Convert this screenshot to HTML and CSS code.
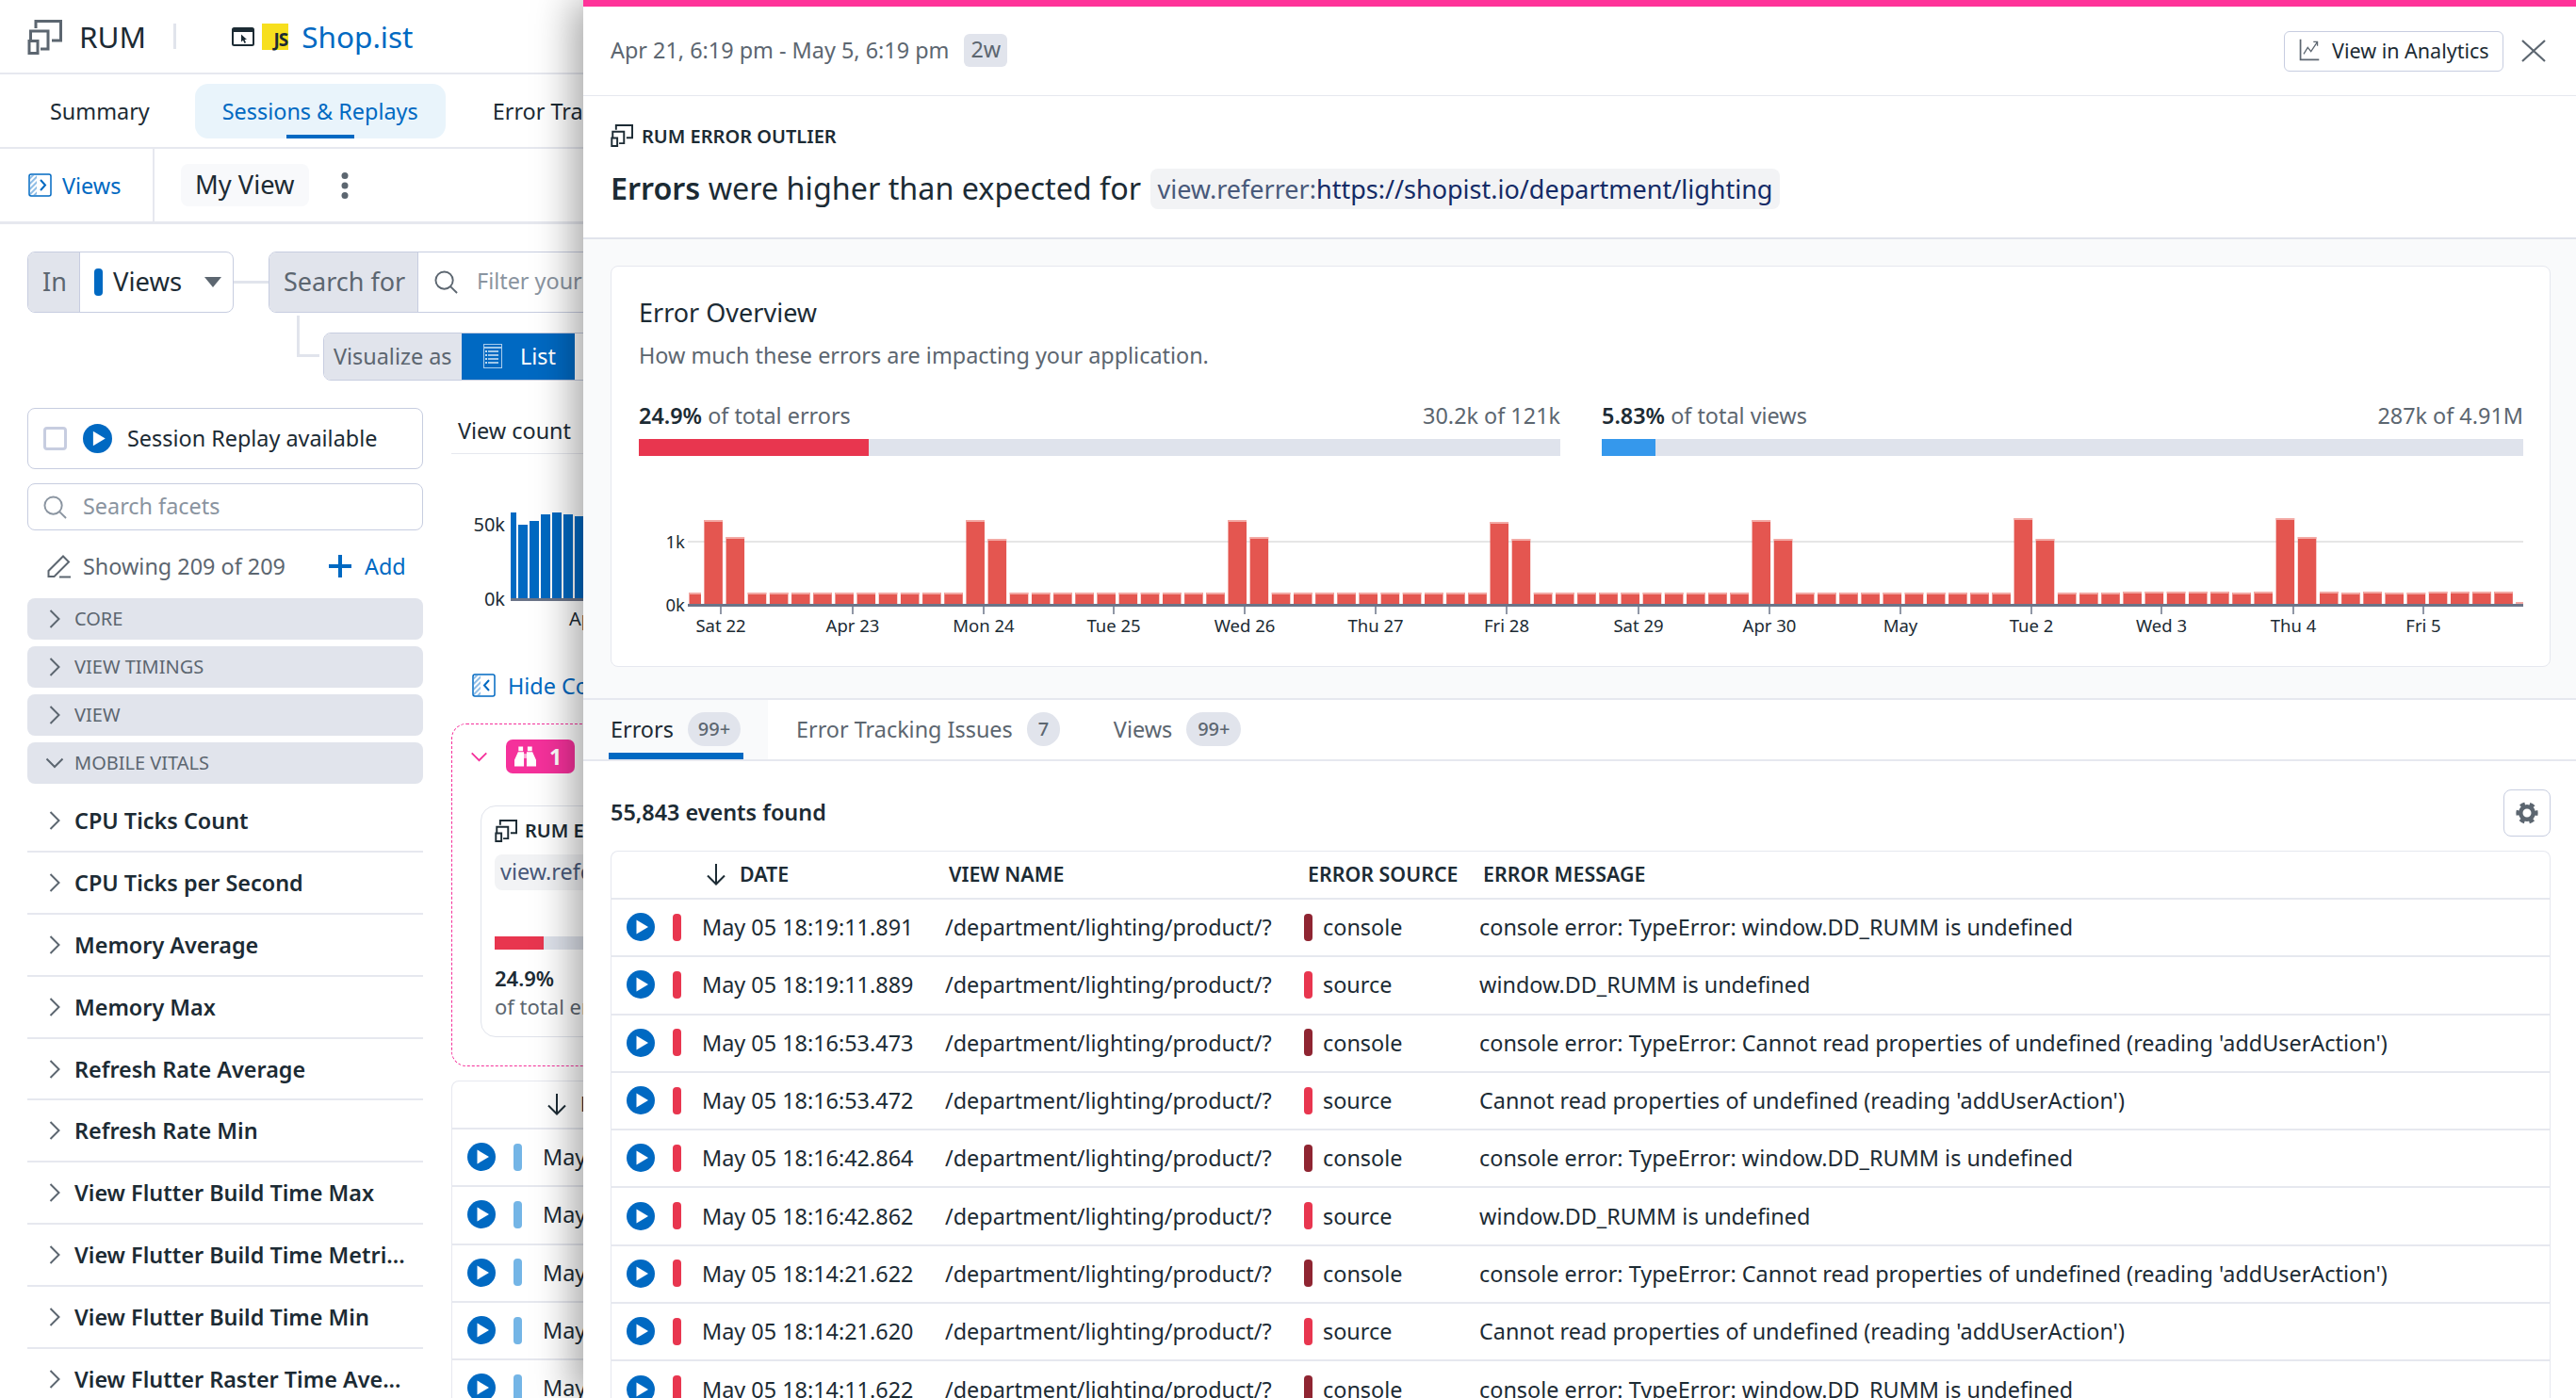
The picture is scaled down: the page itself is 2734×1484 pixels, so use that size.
FILE: index.html
```html
<!DOCTYPE html>
<html lang="en">
<head>
  <meta charset="UTF-8" />
  <meta name="viewport" content="width=device-width, initial-scale=1.0" />
  <title>RUM - Shop.ist</title>
  <link rel="stylesheet" href="styles.css">
</head>
<body>

  <svg class="icon-defs" width="0" height="0">
    <defs>
      <symbol id="rum" viewBox="0 0 37 37">
        <path d="M9 9V1.5H35.5V22H26M3.5 21V12H22V31H14M2 22.5H11V35.5H2Z" fill="none" stroke="currentColor" stroke-width="3"/>
      </symbol>
      <symbol id="search" viewBox="0 0 26 26">
        <circle cx="11" cy="11" r="9.5" fill="none" stroke="currentColor" stroke-width="2"/>
        <path d="M18 18L25 25" stroke="currentColor" stroke-width="2"/>
      </symbol>
      <symbol id="play" viewBox="0 0 30 30">
        <circle cx="15" cy="15" r="15" fill="#0069c2"/>
        <path d="M10.5 7.5L23 15L10.5 22.5Z" fill="#fff"/>
      </symbol>
      <symbol id="chevron" viewBox="0 0 12 22">
        <path d="M1.5 2L10.5 11L1.5 20" fill="none" stroke="currentColor" stroke-width="2"/>
      </symbol>
      <symbol id="chevron-down" viewBox="0 0 20 12">
        <path d="M1.5 1.5L10 10L18.5 1.5" fill="none" stroke="currentColor" stroke-width="2"/>
      </symbol>
      <pattern id="hatch" width="4" height="4" patternUnits="userSpaceOnUse" patternTransform="rotate(45)">
        <rect width="2" height="4" fill="#8fbde6"/>
      </pattern>
    </defs>
  </svg>

  <div class="app">
    <header class="app-header">
      <svg class="rum-logo"><use href="#rum"/></svg>
      <span class="app-title">RUM</span>
      <span class="header-divider"></span>
      <svg class="browser-icon" viewBox="0 0 24 20">
        <rect x="1" y="1" width="22" height="18" rx="1.5" fill="#fff" stroke="#1c2b34" stroke-width="2"/>
        <rect x="1" y="1" width="22" height="4" fill="#1c2b34"/>
        <path d="M10 7.5V15.5L12 13.7L13.5 17L15 16.2L13.6 13H16Z" fill="#1c2b34"/>
      </svg>
      <span class="js-tile">JS</span>
      <span class="app-name">Shop.ist</span>
    </header>

    <nav class="nav-tabs">
      <a class="nav-tab">Summary</a>
      <a class="nav-tab nav-tab-active">Sessions &amp; Replays</a>
      <a class="nav-tab">Error Tracking</a>
    </nav>

    <div class="view-bar">
      <div class="view-toggle">
        <svg class="panel-icon" viewBox="0 0 25 25">
          <rect x="1" y="1" width="23" height="23" rx="2" fill="#fff" stroke="#0069c2" stroke-width="1.5"/>
          <rect x="2" y="2" width="7" height="21" fill="url(#hatch)"/>
          <path d="M13 7L18 12.5L13 18" fill="none" stroke="#0069c2" stroke-width="2"/>
        </svg>
        <span>Views</span>
      </div>
      <span class="view-chip">My View</span>
      <svg class="dots" viewBox="0 0 8 28">
        <circle cx="4" cy="3.5" r="3.5"/>
        <circle cx="4" cy="14" r="3.5"/>
        <circle cx="4" cy="24.5" r="3.5"/>
      </svg>
    </div>

    <div class="query">
      <div class="query-row">
        <div class="query-group query-in">
          <span class="query-label">In</span>
          <span class="query-pipe"></span>
          <span class="query-value">Views</span>
          <span class="caret"></span>
        </div>
        <span class="query-link"></span>
        <div class="query-group query-search">
          <span class="query-label">Search for</span>
          <svg class="search-icon"><use href="#search"/></svg>
          <span class="query-placeholder">Filter your data</span>
        </div>
      </div>
      <div class="query-row query-row-sub">
        <span class="query-elbow"></span>
        <div class="query-group query-visualize">
          <span class="query-label">Visualize as</span>
          <span class="viz-active">
            <svg class="list-icon" viewBox="0 0 20 26">
              <rect x="0.5" y="0.5" width="19" height="25" fill="none" stroke="#a9cdec"/>
              <path d="M1 4H19M5 8H16M5 12H16M5 16H16M5 20H16" stroke="#d5e6f6" stroke-width="1.5"/>
              <path d="M2 8H4M2 12H4M2 16H4M2 20H4" stroke="#fff" stroke-width="1.5"/>
            </svg>
            List
          </span>
          <span class="viz-option">Timeseries</span>
        </div>
      </div>
    </div>

    <div class="workspace">
      <aside class="sidebar">
        <div class="replay-filter">
          <span class="checkbox"></span>
          <svg class="play-lg"><use href="#play"/></svg>
          <span>Session Replay available</span>
        </div>
        <div class="facet-search">
          <svg class="search-icon"><use href="#search"/></svg>
          <span>Search facets</span>
        </div>
        <div class="facet-count">
          <svg class="pencil" viewBox="0 0 26 26">
            <path d="M1.5 24V18L17 2.5L23 8.5L7.5 24Z" fill="none" stroke="currentColor" stroke-width="2"/>
            <path d="M13 24.500H25" stroke="currentColor" stroke-width="2"/>
          </svg>
          <span class="facet-count-text">Showing 209 of 209</span>
          <svg class="plus" viewBox="0 0 24 24"><path d="M12 0V24M0 12H24" stroke="#0069c2" stroke-width="4"/></svg>
          <span class="facet-add">Add</span>
        </div>

        <div class="facet-group"><svg class="chevron"><use href="#chevron"/></svg>Core</div>
        <div class="facet-group"><svg class="chevron"><use href="#chevron"/></svg>View Timings</div>
        <div class="facet-group"><svg class="chevron"><use href="#chevron"/></svg>View</div>
        <div class="facet-group"><svg class="chevron-down"><use href="#chevron-down"/></svg>Mobile Vitals</div>

        <div class="facet-list">
          <div class="facet-row"><svg class="chevron"><use href="#chevron"/></svg>CPU Ticks Count</div>
          <div class="facet-row"><svg class="chevron"><use href="#chevron"/></svg>CPU Ticks per Second</div>
          <div class="facet-row"><svg class="chevron"><use href="#chevron"/></svg>Memory Average</div>
          <div class="facet-row"><svg class="chevron"><use href="#chevron"/></svg>Memory Max</div>
          <div class="facet-row"><svg class="chevron"><use href="#chevron"/></svg>Refresh Rate Average</div>
          <div class="facet-row"><svg class="chevron"><use href="#chevron"/></svg>Refresh Rate Min</div>
          <div class="facet-row"><svg class="chevron"><use href="#chevron"/></svg>View Flutter Build Time Max</div>
          <div class="facet-row"><svg class="chevron"><use href="#chevron"/></svg>View Flutter Build Time Metri...</div>
          <div class="facet-row"><svg class="chevron"><use href="#chevron"/></svg>View Flutter Build Time Min</div>
          <div class="facet-row"><svg class="chevron"><use href="#chevron"/></svg>View Flutter Raster Time Ave...</div>
        </div>
      </aside>

      <main class="results">
        <div class="count-title">View count</div>
        <svg class="mini-chart" viewBox="0 0 140 219">
          <text class="axis-text" x="57" y="82" text-anchor="end">50k</text>
          <text class="axis-text" x="57" y="161" text-anchor="end">0k</text>
          <rect class="mini-bar" x="63" y="62" width="6" height="92"/>
          <rect class="mini-bar" x="71" y="75" width="10" height="79"/>
          <rect class="mini-bar" x="83" y="71" width="10" height="83"/>
          <rect class="mini-bar" x="95" y="64" width="10" height="90"/>
          <rect class="mini-bar" x="107" y="62" width="10" height="92"/>
          <rect class="mini-bar" x="119" y="64" width="10" height="90"/>
          <rect class="mini-bar" x="131" y="66" width="10" height="88"/>
          <rect x="63" y="153" width="80" height="3" fill="#6b7488"/>
          <text class="axis-text" x="125" y="182">Apr</text>
        </svg>
        <div class="hide-controls">
          <svg class="panel-icon" viewBox="0 0 25 25">
            <rect x="1" y="1" width="23" height="23" rx="2" fill="#fff" stroke="#0069c2" stroke-width="1.5"/>
            <rect x="2" y="2" width="7" height="21" fill="url(#hatch)"/>
            <path d="M18 7L13 12.500L18 18" fill="none" stroke="#0069c2" stroke-width="2"/>
          </svg>
          <span>Hide Controls</span>
        </div>

        <section class="outlier-box">
          <div class="outlier-head">
            <svg class="outlier-chevron"><use href="#chevron-down"/></svg>
            <span class="outlier-badge">
              <svg class="binoculars" viewBox="0 0 24 22">
                <path d="M4.500 0H9.500V5H4.500ZM14.500 0H19.500V5H14.500ZM4 6H10.500V22H0V15ZM13.500 6H20L24 15V22H13.500Z" fill="#fff"/>
                <path d="M10.500 8H13.500V13H10.500Z" fill="#fff" opacity="0.6"/>
              </svg>
              1
            </span>
          </div>
          <div class="outlier-card">
            <div class="outlier-card-title">
              <svg class="rum-small"><use href="#rum"/></svg>
              <span>RUM ERROR OUTLIER</span>
            </div>
            <div class="outlier-chip">view.referrer:https://shopist.io</div>
            <div class="outlier-bar"><span class="outlier-fill"></span></div>
            <div class="outlier-value">24.9%</div>
            <div class="outlier-caption">of total errors</div>
          </div>
        </section>

        <div class="event-table event-table-back">
          <div class="event-head">
            <span class="cell-date-head"><svg class="arrow-down" viewBox="0 0 22 24"><path d="M11 1V22M2 13.500L11 22.500L20 13.500" fill="none" stroke="currentColor" stroke-width="2"/></svg>DATE</span>
            <span>VIEW NAME</span>
          </div>
          <div class="event-row"><span class="cell-status"><svg class="play"><use href="#play"/></svg><i class="pipe pipe-view"></i></span><span>May 05 18:19:12.114</span></div>
          <div class="event-row"><span class="cell-status"><svg class="play"><use href="#play"/></svg><i class="pipe pipe-view"></i></span><span>May 05 18:19:11.702</span></div>
          <div class="event-row"><span class="cell-status"><svg class="play"><use href="#play"/></svg><i class="pipe pipe-view"></i></span><span>May 05 18:18:58.340</span></div>
          <div class="event-row"><span class="cell-status"><svg class="play"><use href="#play"/></svg><i class="pipe pipe-view"></i></span><span>May 05 18:18:40.219</span></div>
          <div class="event-row"><span class="cell-status"><svg class="play"><use href="#play"/></svg><i class="pipe pipe-view"></i></span><span>May 05 18:18:31.065</span></div>
        </div>
      </main>
    </div>
  </div>

  <!-- Error outlier side panel, opened over the explorer -->
  <aside class="panel">
    <div class="panel-top">
      <span class="panel-date">Apr 21, 6:19 pm - May 5, 6:19 pm</span>
      <span class="range-chip">2w</span>
      <button class="analytics-btn">
        <svg class="analytics-icon" viewBox="0 0 24 28">
          <path d="M1 1V26H24" fill="none" stroke="#5c6670" stroke-width="2"/>
          <path d="M5 19L10 11L14 16L22 4M17 4H22V9" fill="none" stroke="#5c6670" stroke-width="1.500"/>
        </svg>
        View in Analytics
      </button>
      <svg class="close-icon" viewBox="0 0 26 24"><path d="M1 1L25 23M25 1L1 23" stroke="#5c6670" stroke-width="2.200"/></svg>
    </div>

    <div class="panel-title-block">
      <div class="panel-kicker">
        <svg class="rum-small"><use href="#rum"/></svg>
        <span>RUM ERROR OUTLIER</span>
      </div>
      <h1 class="panel-title"><b>Errors</b> were higher than expected for <span class="query-chip"><span class="chip-key">view.referrer:</span>https://shopist.io/department/lighting</span></h1>
    </div>

    <div class="overview-zone">
      <section class="overview-card">
        <h2>Error Overview</h2>
        <p>How much these errors are impacting your application.</p>
        <div class="impact-grid">
          <div>
            <div class="impact-line"><span><b>24.9%</b> of total errors</span><span>30.2k of 121k</span></div>
            <div class="impact-bar"><span class="impact-fill fill-errors"></span></div>
          </div>
          <div>
            <div class="impact-line"><span><b>5.83%</b> of total views</span><span>287k of 4.91M</span></div>
            <div class="impact-bar"><span class="impact-fill fill-views"></span></div>
          </div>
        </div>
        <svg class="error-chart" id="errorChart" viewBox="0 0 2000 150"></svg>
      </section>
    </div>

    <div class="detail-tabs">
      <a class="detail-tab detail-tab-active">Errors <span class="tab-count">99+</span></a>
      <a class="detail-tab">Error Tracking Issues <span class="tab-count tab-count-small">7</span></a>
      <a class="detail-tab detail-tab-views">Views <span class="tab-count">99+</span></a>
    </div>

    <div class="events">
      <div class="events-top">
        <span class="events-found">55,843 events found</span>
        <button class="gear-btn">
          <svg viewBox="0 0 24 24" width="24" height="24">
            <circle cx="12" cy="12" r="9.800" fill="none" stroke="#5c6670" stroke-width="3.600" stroke-dasharray="5.200 5.060" transform="rotate(-15 12 12)"/>
            <circle cx="12" cy="12" r="6.800" fill="none" stroke="#5c6670" stroke-width="4.600"/>
          </svg>
        </button>
      </div>

      <div class="event-table">
        <div class="event-head">
          <span class="cell-date-head"><svg class="arrow-down" viewBox="0 0 22 24"><path d="M11 1V22M2 13.500L11 22.500L20 13.500" fill="none" stroke="currentColor" stroke-width="2"/></svg>DATE</span>
          <span class="head-cell">VIEW NAME</span>
          <span class="head-cell">ERROR SOURCE</span>
          <span class="head-cell">ERROR MESSAGE</span>
        </div>
        <div class="event-row"><span class="cell-status"><svg class="play"><use href="#play"/></svg><i class="pipe pipe-error"></i></span><span>May 05 18:19:11.891</span><span>/department/lighting/product/?</span><span class="cell-source"><i class="pipe pipe-console"></i>console</span><span>console error: TypeError: window.DD_RUMM is undefined</span></div>
        <div class="event-row"><span class="cell-status"><svg class="play"><use href="#play"/></svg><i class="pipe pipe-error"></i></span><span>May 05 18:19:11.889</span><span>/department/lighting/product/?</span><span class="cell-source"><i class="pipe pipe-error"></i>source</span><span>window.DD_RUMM is undefined</span></div>
        <div class="event-row"><span class="cell-status"><svg class="play"><use href="#play"/></svg><i class="pipe pipe-error"></i></span><span>May 05 18:16:53.473</span><span>/department/lighting/product/?</span><span class="cell-source"><i class="pipe pipe-console"></i>console</span><span>console error: TypeError: Cannot read properties of undefined (reading 'addUserAction')</span></div>
        <div class="event-row"><span class="cell-status"><svg class="play"><use href="#play"/></svg><i class="pipe pipe-error"></i></span><span>May 05 18:16:53.472</span><span>/department/lighting/product/?</span><span class="cell-source"><i class="pipe pipe-error"></i>source</span><span>Cannot read properties of undefined (reading 'addUserAction')</span></div>
        <div class="event-row"><span class="cell-status"><svg class="play"><use href="#play"/></svg><i class="pipe pipe-error"></i></span><span>May 05 18:16:42.864</span><span>/department/lighting/product/?</span><span class="cell-source"><i class="pipe pipe-console"></i>console</span><span>console error: TypeError: window.DD_RUMM is undefined</span></div>
        <div class="event-row"><span class="cell-status"><svg class="play"><use href="#play"/></svg><i class="pipe pipe-error"></i></span><span>May 05 18:16:42.862</span><span>/department/lighting/product/?</span><span class="cell-source"><i class="pipe pipe-error"></i>source</span><span>window.DD_RUMM is undefined</span></div>
        <div class="event-row"><span class="cell-status"><svg class="play"><use href="#play"/></svg><i class="pipe pipe-error"></i></span><span>May 05 18:14:21.622</span><span>/department/lighting/product/?</span><span class="cell-source"><i class="pipe pipe-console"></i>console</span><span>console error: TypeError: Cannot read properties of undefined (reading 'addUserAction')</span></div>
        <div class="event-row"><span class="cell-status"><svg class="play"><use href="#play"/></svg><i class="pipe pipe-error"></i></span><span>May 05 18:14:21.620</span><span>/department/lighting/product/?</span><span class="cell-source"><i class="pipe pipe-error"></i>source</span><span>Cannot read properties of undefined (reading 'addUserAction')</span></div>
        <div class="event-row"><span class="cell-status"><svg class="play"><use href="#play"/></svg><i class="pipe pipe-error"></i></span><span>May 05 18:14:11.622</span><span>/department/lighting/product/?</span><span class="cell-source"><i class="pipe pipe-console"></i>console</span><span>console error: TypeError: window.DD_RUMM is undefined</span></div>
      </div>
    </div>
  </aside>

  <script src="chart.js"></script>
</body>
</html>
```

FILE: styles.css
```css
* {
  box-sizing: border-box;
}

html, body {
  height: 100%;
  margin: 0;
  overflow: hidden;
}

body {
  font-family: "Noto Sans", sans-serif;
  font-size: 23.4px;
  color: #1c2b34;
  background-color: #fff;
}

b {
  font-weight: 600;
}

.icon-defs {
  position: absolute;
}

.app {
  width: 1400px;
  height: 100%;
  overflow: hidden;
}

/* Top header */
.app-header {
  display: flex;
  align-items: center;
  height: 79px;
  padding-left: 29px;
  border-bottom: 2px solid #e6e8ef;
}

.rum-logo {
  width: 37px;
  height: 37px;
  color: #5c6670;
  margin-top: 1px;
}

.app-title {
  font-size: 31.5px;
  margin-left: 18px;
}

.header-divider {
  width: 3px;
  height: 27px;
  margin: 0 59px 0 29px;
  background-color: #e1e4ec;
}

.browser-icon {
  width: 24px;
  height: 20px;
}

.js-tile {
  display: flex;
  align-items: flex-end;
  justify-content: flex-end;
  width: 28px;
  height: 28px;
  margin-left: 8px;
  padding: 0 1px 0 0;
  font-size: 19px;
  font-weight: 700;
  letter-spacing: -1px;
  line-height: 21px;
  color: #1c2b34;
  background-color: #f7df1e;
}

.app-name {
  font-size: 31.5px;
  color: #0069c2;
  margin-left: 14px;
}

/* Page tabs */
.nav-tabs {
  display: flex;
  align-items: center;
  height: 79px;
  padding-left: 29px;
  border-bottom: 2px solid #e6e8ef;
}

.nav-tab {
  padding: 0 24px;
  height: 58px;
  line-height: 59px;
  white-space: nowrap;
}

.nav-tab-active {
  position: relative;
  margin: 0 21px 0 24px;
  padding: 0 29px;
  color: #0069c2;
  background-color: #e9f4fb;
  border-radius: 14px;
}

.nav-tab-active::after {
  content: "";
  position: absolute;
  left: 97px;
  bottom: 0;
  width: 72px;
  height: 4px;
  background-color: #0069c2;
}

.nav-tab:last-child {
  padding: 0 29px;
}

/* Saved view bar */
.view-bar {
  display: flex;
  align-items: center;
  height: 80px;
  border-bottom: 3px solid #e6e8ef;
}

.view-toggle {
  display: flex;
  align-items: center;
  width: 164px;
  height: 100%;
  padding-left: 30px;
  color: #0069c2;
  border-right: 2px solid #e6e8ef;
}

.view-toggle span {
  margin-left: 11px;
}

.panel-icon {
  width: 25px;
  height: 25px;
}

.view-chip {
  margin-left: 28px;
  padding: 0 15px;
  height: 45px;
  line-height: 44px;
  font-size: 27.3px;
  background-color: #f8f9fb;
  border-radius: 8px;
}

.dots {
  width: 8px;
  height: 28px;
  margin-left: 34px;
  fill: #5c6670;
}

/* Query builder */
.query {
  padding: 29px 0 0 29px;
}

.query-row {
  display: flex;
  align-items: center;
}

.query-group {
  display: flex;
  align-items: center;
  height: 65px;
  border: 1px solid #c7cde0;
  border-radius: 8px;
  overflow: hidden;
  flex: none;
}

.query-label {
  display: flex;
  align-items: center;
  height: 100%;
  padding-bottom: 3px;
  font-size: 27px;
  white-space: nowrap;
  color: #5c6670;
  background-color: #e1e4ec;
  border-right: 1px solid #c7cde0;
}

.query-in {
  width: 219px;
}

.query-in .query-label {
  padding: 0 15px 3px;
  width: 55px;
}

.query-pipe {
  width: 9px;
  height: 29px;
  margin-left: 15px;
  border-radius: 4px;
  background-color: #0069c2;
}

.query-value {
  margin: -3px 0 0 11px;
  font-size: 27.4px;
}

.caret {
  width: 0;
  height: 0;
  margin-left: 24px;
  border-left: 9px solid transparent;
  border-right: 9px solid transparent;
  border-top: 11px solid #5c6670;
}

.query-link {
  width: 37px;
  height: 3px;
  flex: none;
  background-color: #e1e4ec;
}

.query-search {
  width: 900px;
}

.query-search .query-label {
  width: 158px;
  padding: 0 15px 3px;
}

.query-search .search-icon {
  margin-left: 17px;
  color: #5c6670;
}

.query-placeholder {
  margin: -4px 0 0 20px;
  color: #8a94a0;
}

.query-row-sub {
  align-items: flex-start;
  margin-top: 21px;
}

.query-elbow {
  width: 24px;
  height: 44px;
  margin: -18px 0 0 286px;
  border-left: 3px solid #e1e4ec;
  border-bottom: 3px solid #e1e4ec;
}

.query-visualize {
  height: 51px;
  margin-left: 4px;
}

.query-visualize .query-label {
  padding: 0 10px 2px;
  width: 146px;
  font-size: 23.4px;
  border-right: 0;
}

.viz-active {
  display: flex;
  align-items: center;
  height: 100%;
  width: 120px;
  padding: 0 0 2px 23px;
  color: #fff;
  background-color: #0069c2;
}

.list-icon {
  width: 20px;
  height: 26px;
  margin-right: 19px;
}

.viz-option {
  padding: 0 24px;
}

/* Workspace below the query */
.workspace {
  display: flex;
  margin-top: 29px;
}

.sidebar {
  width: 420px;
  margin-left: 29px;
  flex: none;
}

.replay-filter {
  display: flex;
  align-items: center;
  height: 65px;
  padding-left: 16px;
  border: 1px solid #c7cde0;
  border-radius: 8px;
}

.replay-filter span:last-child {
  margin-top: -2px;
}

.checkbox {
  width: 25px;
  height: 25px;
  border: 3px solid #c7cde0;
  border-radius: 4px;
}

.play-lg {
  width: 31px;
  height: 31px;
  margin: 0 16px 0 17px;
}

.facet-search {
  display: flex;
  align-items: center;
  height: 50px;
  margin-top: 15px;
  padding-left: 16px;
  color: #8a94a0;
  border: 1px solid #c7cde0;
  border-radius: 8px;
}

.search-icon {
  width: 25px;
  height: 25px;
  color: #8a94a0;
  flex: none;
}

.facet-search span {
  margin: -2px 0 0 17px;
}

.facet-count {
  display: flex;
  align-items: center;
  height: 72px;
  padding: 4px 0 0 21px;
  color: #5c6670;
}

.pencil {
  width: 26px;
  height: 26px;
}

.facet-count-text {
  margin-left: 12px;
}

.plus {
  width: 24px;
  height: 24px;
  margin-left: 46px;
}

.facet-add {
  margin-left: 14px;
  color: #0069c2;
}

.facet-group {
  display: flex;
  align-items: center;
  height: 44px;
  margin-bottom: 7px;
  padding-bottom: 1px;
  font-size: 20px;
  text-transform: uppercase;
  color: #5c6670;
  background-color: #e1e4ec;
  border-radius: 8px;
}

.chevron {
  width: 12px;
  height: 22px;
  margin: 0 15px 0 23px;
  color: #5c6670;
  flex: none;
}

.chevron-down {
  width: 20px;
  height: 12px;
  margin: 0 11px 0 19px;
  color: #5c6670;
  flex: none;
}

.facet-row {
  display: flex;
  align-items: center;
  height: 65.9px;
  font-weight: 600;
  white-space: nowrap;
  border-bottom: 2px solid #e6e8ef;
}

/* Results column, mostly hidden by the panel */
.results {
  width: 860px;
  margin-left: 30px;
  flex: none;
}

.count-title {
  height: 49px;
  padding-left: 7px;
  line-height: 49px;
  border-bottom: 1px solid #e6e8ef;
  white-space: nowrap;
}

.mini-chart {
  display: block;
  width: 140px;
  height: 219px;
  overflow: visible;
}

.mini-bar {
  fill: #0069c2;
}

.axis-text {
  font-size: 20px;
  fill: #1c2b34;
}

.hide-controls {
  display: flex;
  align-items: center;
  height: 25px;
  margin: 14px 0 0 22px;
  color: #0069c2;
}

.hide-controls span {
  margin-left: 13px;
}

.outlier-box {
  height: 364px;
  margin-top: 28px;
  border: 1px dashed #f5319b;
  border-radius: 16px;
}

.outlier-head {
  display: flex;
  align-items: center;
  height: 36px;
  margin-top: 16px;
  padding-left: 19px;
}

.outlier-chevron {
  width: 19px;
  height: 11px;
  color: #f5319b;
}

.outlier-badge {
  display: flex;
  align-items: center;
  width: 73px;
  height: 36px;
  margin-left: 19px;
  padding-left: 9px;
  font-size: 23.4px;
  font-weight: 700;
  color: #fff;
  background-color: #f5319b;
  border-radius: 7px;
}

.binoculars {
  width: 23px;
  height: 22px;
  margin-right: 14px;
}

.outlier-card {
  height: 246px;
  margin: 34px 0 0 30px;
  padding: 12px 14px;
  border: 1px solid #e1e4ec;
  border-radius: 16px;
}

.outlier-card-title {
  display: flex;
  align-items: center;
  font-size: 20px;
  font-weight: 600;
}

.rum-small {
  width: 24px;
  height: 24px;
  color: #1c2b34;
  flex: none;
}

.outlier-card-title span {
  margin-left: 8px;
  white-space: nowrap;
}

.outlier-chip {
  height: 38px;
  margin-top: 12px;
  padding-left: 6px;
  line-height: 36px;
  color: #48597a;
  background-color: #f2f3f5;
  border-radius: 8px;
  white-space: nowrap;
}

.outlier-bar {
  height: 14px;
  margin-top: 49px;
  background-color: #dfe3ec;
}

.outlier-fill {
  display: block;
  width: 52px;
  height: 100%;
  background-color: #e8364f;
}

.outlier-value {
  margin-top: 15px;
  font-size: 22px;
  font-weight: 600;
}

.outlier-caption {
  margin-top: 0;
  font-size: 22px;
  color: #5c6670;
}

/* Side panel */
.panel {
  position: absolute;
  top: 0;
  bottom: 0;
  left: 619px;
  right: 0;
  overflow: hidden;
  background-color: #fff;
  border-top: 7px solid #ff3399;
  box-shadow: -10px 0 40px rgba(0, 0, 0, 0.36);
}

.panel-top {
  display: flex;
  align-items: center;
  height: 95px;
  padding: 0 32px 0 29px;
  border-bottom: 1px solid #e6e8ef;
}

.panel-date {
  margin-top: -2px;
  color: #5c6670;
}

.range-chip {
  margin: -1px 0 0 16px;
  padding: 0 7px;
  height: 35px;
  line-height: 33px;
  color: #5c6670;
  background-color: #e1e4ec;
  border-radius: 6px;
}

.analytics-btn {
  display: flex;
  align-items: center;
  height: 43px;
  width: 233px;
  margin-left: auto;
  padding: 0 0 2px 14px;
  font-family: inherit;
  font-size: 21.5px;
  color: #1c2b34;
  background-color: #fff;
  border: 1px solid #c7cde0;
  border-radius: 6px;
}

.analytics-icon {
  width: 24px;
  height: 24px;
  margin-right: 12px;
}

.close-icon {
  width: 26px;
  height: 24px;
  margin-left: 19px;
}

.panel-title-block {
  height: 152px;
  padding: 28px 29px 0;
  border-bottom: 2px solid #e1e4ec;
}

.panel-kicker {
  display: flex;
  align-items: center;
  height: 28px;
  font-size: 20px;
  font-weight: 600;
}

.panel-kicker span {
  margin-left: 9px;
}

.panel-title {
  height: 43px;
  margin: 21px 0 0;
  font-size: 32.3px;
  font-weight: 400;
  line-height: 40px;
  white-space: nowrap;
}

.query-chip {
  display: inline-block;
  height: 43px;
  margin-left: 1px;
  padding: 0 8px;
  line-height: 43px;
  font-size: 27px;
  vertical-align: top;
  color: #142b66;
  background-color: #f2f3f5;
  border-radius: 8px;
}

.chip-key {
  color: #48597a;
}

.overview-zone {
  height: 487px;
  padding: 28px 27px 0 29px;
  background-color: #f9fafb;
}

.overview-card {
  height: 426px;
  padding: 30px 29px 0;
  background-color: #fff;
  border: 1px solid #e6e8ef;
  border-radius: 8px;
}

.overview-card h2 {
  margin: 0;
  font-size: 27px;
  font-weight: 400;
  line-height: 38px;
}

.overview-card p {
  margin: 10px 0 0;
  line-height: 32px;
  color: #5c6670;
}

.impact-grid {
  display: grid;
  grid-template-columns: 978px 978px;
  gap: 44px;
  margin-top: 33px;
}

.impact-line {
  display: flex;
  justify-content: space-between;
  line-height: 31px;
  color: #5c6670;
}

.impact-line b {
  color: #1c2b34;
}

.impact-bar {
  height: 18px;
  margin-top: 9px;
  background-color: #dfe3ec;
}

.impact-fill {
  display: block;
  height: 100%;
}

.fill-errors {
  width: 244px;
  background-color: #e8364f;
}

.fill-views {
  width: 57px;
  background-color: #3598ec;
}

.error-chart {
  display: block;
  width: 2000px;
  height: 150px;
  margin-top: 56px;
}

.grid-line {
  stroke: #e6e6e6;
  stroke-width: 2;
}

.bar-body {
  fill: #e45650;
}

.bar-cap {
  fill: #f3a9a4;
}

.chart-axis {
  fill: #6b7488;
}

.chart-tick {
  stroke: #6b7488;
  stroke-width: 1.5;
}

.chart-text {
  font-size: 18.5px;
  fill: #1c2b34;
}

/* Tabs under the overview */
.detail-tabs {
  display: flex;
  height: 67px;
  border-top: 2px solid #e6e8ef;
  border-bottom: 2px solid #e6e8ef;
}

.detail-tab {
  display: flex;
  align-items: center;
  margin-left: 30px;
  padding-bottom: 1px;
  color: #5c6670;
  white-space: pre;
}

.detail-tab-active {
  position: relative;
  margin-left: 0;
  padding: 0 29px 1px;
  width: 196px;
  color: #1c2b34;
  background-color: #f9fafb;
}

.detail-tab-active::after {
  content: "";
  position: absolute;
  left: 27px;
  bottom: 0;
  width: 143px;
  height: 7px;
  background-color: #0069c2;
}

.detail-tab-views {
  margin-left: 57px;
}

.tab-count {
  display: inline-block;
  width: 58px;
  height: 36px;
  margin-left: 9px;
  line-height: 35px;
  text-align: center;
  font-size: 20px;
  font-weight: 500;
  color: #5c6670;
  background-color: #e1e4ec;
  border-radius: 18px;
}

.tab-count-small {
  width: 35px;
}

.events {
  padding: 0 27px 0 29px;
}

.events-top {
  display: flex;
  align-items: center;
  justify-content: space-between;
  height: 50px;
  margin-top: 30px;
}

.events-found {
  margin-top: -2px;
  font-weight: 600;
}

.gear-btn {
  display: flex;
  align-items: center;
  justify-content: center;
  width: 50px;
  height: 50px;
  padding: 0;
  background-color: #fff;
  border: 1px solid #c7cde0;
  border-radius: 8px;
}

/* Events table, used in the panel and behind it */
.event-table {
  margin-top: 15px;
  border: 1px solid #e6e8ef;
  border-bottom: 0;
  border-radius: 8px 8px 0 0;
}

.event-table-back {
  margin-top: 15px;
}

.event-head,
.event-row {
  display: grid;
  grid-template-columns: 96px 258px 381px 186px 1fr;
  align-items: center;
  white-space: nowrap;
}

.event-head {
  height: 51px;
  padding-bottom: 2px;
  font-size: 21.4px;
  font-weight: 600;
  border-bottom: 2px solid #e6e8ef;
}

.cell-date-head {
  display: flex;
  align-items: center;
  grid-column: 2;
  margin-left: 4px;
}

.head-cell {
  margin-left: 4px;
}

.arrow-down {
  width: 22px;
  height: 24px;
  margin-right: 14px;
  color: #1c2b34;
}

.event-row {
  height: 61.3px;
  padding-bottom: 1px;
  border-bottom: 2px solid #e6e8ef;
}

.cell-status {
  display: flex;
  align-items: center;
  padding-left: 16px;
}

.play {
  width: 30px;
  height: 30px;
  flex: none;
}

.pipe {
  display: inline-block;
  width: 9px;
  height: 29px;
  border-radius: 4px;
  flex: none;
}

.cell-status .pipe {
  margin-left: 19px;
}

.pipe-error {
  background-color: #e8364f;
}

.pipe-console {
  background-color: #8f2532;
}

.pipe-view {
  background-color: #74b5e6;
}

.cell-source {
  display: flex;
  align-items: center;
}

.cell-source .pipe {
  margin-right: 11px;
}
```

FILE: chart.js
```js
// Error count per 4h bucket, drawn as page coordinates minus the chart origin
const originX = 678;
const originY = 540;
const baseline = 642;

const chart = document.getElementById('errorChart');

// Top of each bar that is not at the usual height
const tops = {
  1: 552, 2: 570, 13: 552, 14: 572, 25: 552, 26: 570, 37: 554, 38: 572,
  49: 552, 50: 572, 61: 550, 62: 572, 73: 550, 74: 570,
  66: 628, 67: 628, 68: 628, 69: 628, 70: 628, 72: 628, 75: 628, 77: 628,
  80: 628, 81: 628, 82: 628, 83: 628, 84: 639
};

const ticks = [
  ['Sat 22', 765], ['Apr 23', 905], ['Mon 24', 1044], ['Tue 25', 1182], ['Wed 26', 1321],
  ['Thu 27', 1460], ['Fri 28', 1599], ['Sat 29', 1739], ['Apr 30', 1878], ['May', 2017],
  ['Tue 2', 2156], ['Wed 3', 2294], ['Thu 4', 2434], ['Fri 5', 2572]
];

function addShape(tag, attrs, text) {
  const el = document.createElementNS('http://www.w3.org/2000/svg', tag);
  Object.keys(attrs).forEach(key => el.setAttribute(key, attrs[key]));
  if (text) el.textContent = text;
  chart.appendChild(el);
}

addShape('line', { class: 'grid-line', x1: 52, x2: 2000, y1: 35, y2: 35 });
addShape('text', { class: 'chart-text', x: 49, y: 42, 'text-anchor': 'end' }, '1k');
addShape('text', { class: 'chart-text', x: 49, y: 109, 'text-anchor': 'end' }, '0k');

for (let i = 0; i <= 84; i++) {
  let x = 69.4 + (i - 1) * 23.17;
  let width = 19.5;
  if (i === 0) { x = 53.5; width = 12.5; }
  if (i === 84) { width = 7.5; }
  const top = (tops[i] || 629) - originY;
  addShape('rect', { class: 'bar-body', x: x, y: top, width: width, height: baseline - originY - top });
  addShape('rect', { class: 'bar-cap', x: x, y: top, width: width, height: 2 });
}

addShape('rect', { class: 'chart-axis', x: 52, y: 101, width: 1948, height: 3 });

ticks.forEach(([label, pageX]) => {
  const x = pageX - originX;
  addShape('line', { class: 'chart-tick', x1: x, x2: x, y1: 104, y2: 112 });
  addShape('text', { class: 'chart-text', x: x, y: 131, 'text-anchor': 'middle' }, label);
});
```
